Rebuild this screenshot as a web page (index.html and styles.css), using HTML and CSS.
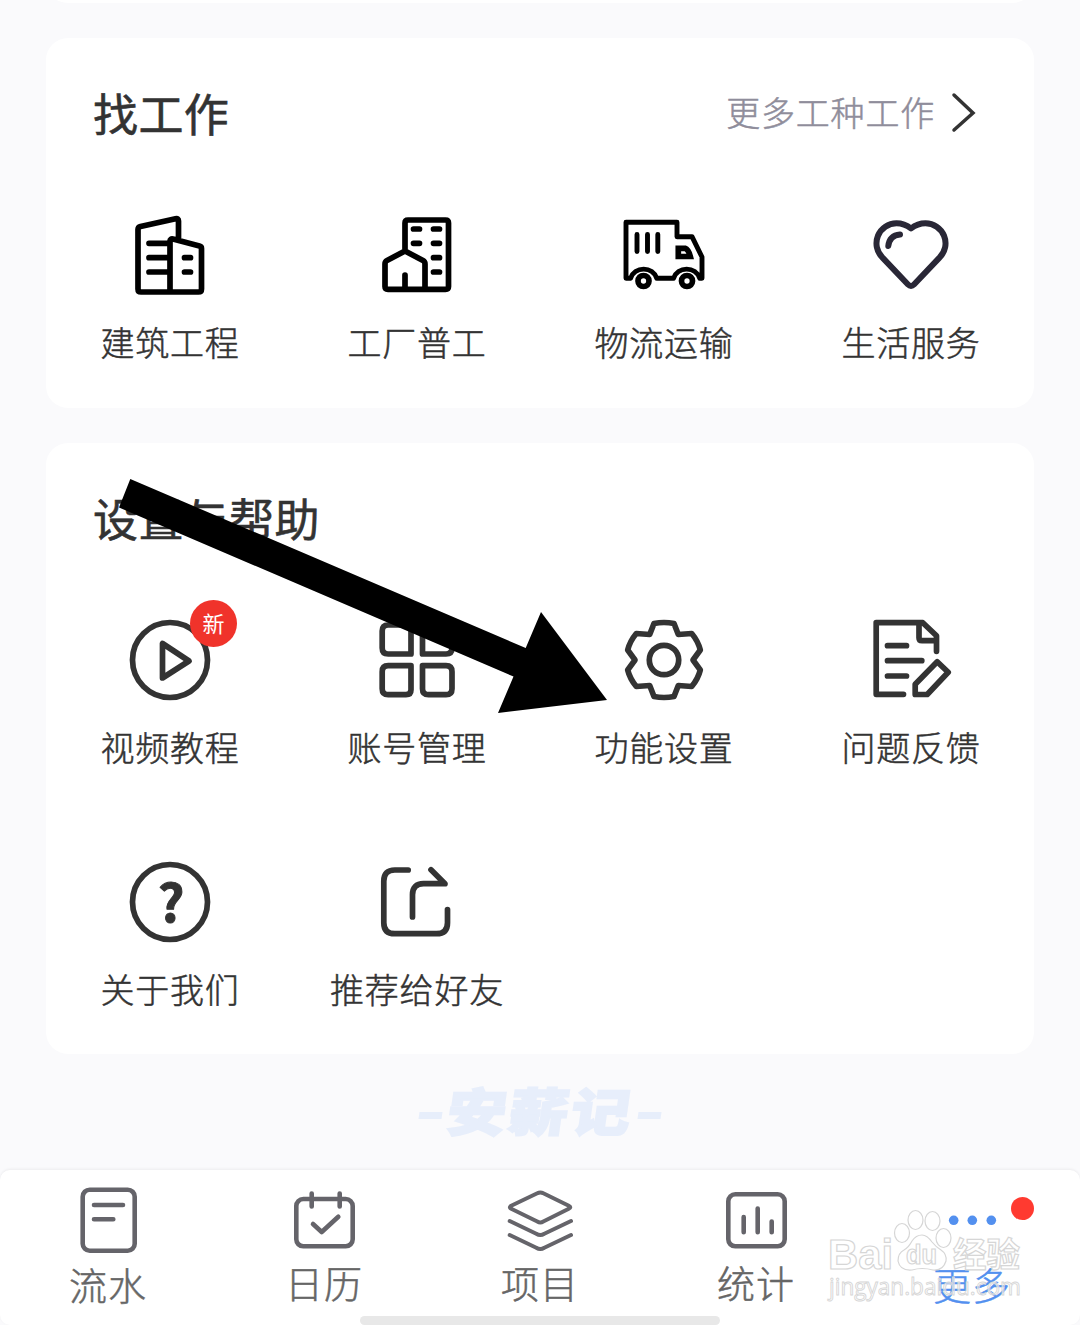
FILE: index.html
```html
<!DOCTYPE html>
<html lang="zh-CN">
<head>
  <meta charset="UTF-8">
  <meta name="viewport" content="width=device-width, initial-scale=1.0">
  <title>更多</title>
  <link rel="stylesheet" href="styles.css">
</head>
<body>
  <main class="page">
    <section class="card card-prev"></section>

    <section class="card jobs">
      <header class="card-header">
        <h2>找工作</h2>
        <a class="more"><span>更多工种工作</span>
          <svg class="chevron" viewBox="0 0 26 42"><path d="M4 3L23 21L4 38"/></svg>
        </a>
      </header>
      <div class="grid">
        <div class="item">
          <svg class="icon black" viewBox="0 0 96 96">
            <path d="M57.500 30V13Q57.500 10 54.500 10.700L19.500 18.500Q17 19.200 17 21.500V81Q17 84 20 84H77.500Q80.500 84 80.500 81V40.500Q80.500 38.500 78.500 38L52 31Q49 30.500 49 33V84"/>
            <path d="M28 35.300H48M28 49.700H48M28 64H48M63.500 49.700H69.500M63.500 64H69.500"/>
          </svg>
          <span>建筑工程</span>
        </div>
        <div class="item">
          <svg class="icon black" viewBox="0 0 96 96">
            <path d="M37 43V15Q37 12 40 12H77.500Q80.500 12 80.500 15V78.500Q80.500 81.300 77.500 81.300H20Q17 81.300 17 78.500V56Q17 53.500 19 52.500L37 43L55 52.500Q57 53.500 57 56V81M37 67V81"/>
            <path d="M45.500 21H51.500M45.500 35.300H51.500M65.500 21H71.500M65.500 35.300H71.500M65.500 49.700H71.500M65.500 64H71.500"/>
          </svg>
          <span>工厂普工</span>
        </div>
        <div class="item">
          <svg class="icon black" viewBox="0 0 96 96">
            <path class="thin" d="M15.500 70.300H11V14.300H62V28.700H77L87 49V70.300H84.800A14 14 0 0 0 58.500 70.300H41.800A14 14 0 0 0 15.500 70.300"/>
            <path class="thin" d="M22 26.500V43.500M32.500 26.500V43.500M42.800 26.500V43.500"/>
            <path class="miter" d="M63.300 40.300H70Q73.500 41.500 75.300 48.500H63.300Z"/>
            <circle cx="28.500" cy="73" r="5.500"/>
            <circle cx="72" cy="73" r="5.500"/>
          </svg>
          <span>物流运输</span>
        </div>
        <div class="item">
          <svg class="icon heart" viewBox="0 0 96 96">
            <path d="M49 20.500C44.500 17 40 15.300 34.500 15.300A20 20 0 0 0 20.500 49.600L46 76.500Q49 79.500 52 76.500L77.500 49.600A20 20 0 0 0 63.500 15.300C58 15.300 53.500 17 49 20.500Z"/>
            <path d="M26.300 38Q27.500 27.500 38 26.500"/>
          </svg>
          <span>生活服务</span>
        </div>
      </div>
    </section>

    <section class="card">
      <header class="card-header">
        <h2>设置与帮助</h2>
      </header>
      <div class="grid">
        <div class="item">
          <svg class="icon" viewBox="0 0 96 96">
            <circle cx="49" cy="47" r="37.500"/>
            <path d="M41.500 30.500V65L68 48Z"/>
          </svg>
          <b class="badge">新</b>
          <span>视频教程</span>
        </div>
        <div class="item">
          <svg class="icon" viewBox="0 0 96 96">
            <path d="M20.200 12H38Q43 12 43 17V41H20.200Q14.200 41 14.200 35V18Q14.200 12 20.200 12Z"/>
            <path d="M60 12H78Q84 12 84 18V35Q84 41 78 41H54.500V17Q54.500 12 60 12Z"/>
            <path d="M20.200 52.700H43V76.700Q43 81.700 38 81.700H20.200Q14.200 81.700 14.200 75.700V58.700Q14.200 52.700 20.200 52.700Z"/>
            <path d="M54.500 52.700H78Q84 52.700 84 58.700V75.700Q84 81.700 78 81.700H60.500Q54.500 81.700 54.500 75.700Z"/>
          </svg>
          <span>账号管理</span>
        </div>
        <div class="item">
          <svg class="icon" viewBox="0 0 96 96">
            <path d="M39 10.500Q49 8.500 59 10.500L63.300 21.500L76.700 20.500Q83 28 85.300 37L78 47L85.300 57Q83 66 76.700 73.500L63.300 72.500L59 83.500Q49 85.500 39 83.500L34.700 72.500L21.300 73.500Q15 66 12.700 57L20 47L12.700 37Q15 28 21.300 20.500L34.700 21.500Z"/>
            <circle cx="49" cy="47" r="14.700"/>
          </svg>
          <span>功能设置</span>
        </div>
        <div class="item">
          <svg class="icon" viewBox="0 0 96 96">
            <path d="M41.500 81.300H14.200V9.700H60.800L74.500 22.700V38.300M57 10V24.700Q57 27.700 60 27.700H74"/>
            <path d="M25.500 32.700H44.500M25.500 47.700H59.800M25.500 63H44.500"/>
            <path d="M75.200 48.700L86.200 59.300L65.200 81.500H53.200V71.300Z"/>
          </svg>
          <span>问题反馈</span>
        </div>
        <div class="item">
          <svg class="icon" viewBox="0 0 96 96">
            <circle cx="49" cy="47" r="37.500"/>
            <text class="question" x="50.500" y="67" text-anchor="middle">?</text>
          </svg>
          <span>关于我们</span>
        </div>
        <div class="item">
          <svg class="icon" viewBox="0 0 96 96">
            <path d="M40.200 15H26.800Q15.800 15 15.800 26V67.700Q15.800 78.700 26.800 78.700H68.500Q79.500 78.700 79.500 67.700V54.500"/>
            <path d="M44.500 62V39.700Q44.500 28.700 55.500 28.700H77L63 14.700"/>
          </svg>
          <span>推荐给好友</span>
        </div>
      </div>
      <svg class="pointer" viewBox="0 0 490 236">
        <path d="M12.300 1L1 29.500L395.500 198.500L380 235L489 222L423 134L407.700 170Z"/>
      </svg>
    </section>

    <div class="brand"><i></i><span>安薪记</span><i></i></div>
  </main>

  <nav class="tabbar">
    <a class="tab low">
      <svg class="tab-icon" viewBox="0 0 72 72">
        <rect x="10.700" y="5.700" width="52" height="61" rx="7"/>
        <path d="M22 21H51M22 35.300H41.300"/>
      </svg>
      <span>流水</span>
    </a>
    <a class="tab">
      <svg class="tab-icon" viewBox="0 0 72 72">
        <rect x="8.300" y="15" width="56.400" height="47.300" rx="7"/>
        <path d="M23.700 9.500V22.500M51.700 9.500V22.500M25 40L33.700 48L50.300 32.700"/>
      </svg>
      <span>日历</span>
    </a>
    <a class="tab">
      <svg class="tab-icon layers" viewBox="0 0 72 72">
        <path d="M33.300 9.300Q36.300 7.500 39.300 9.300L64.800 21.800Q67.800 23.300 64.800 24.800L39.300 37.500Q36.300 39.300 33.300 37.500L7.200 24.800Q4.500 23.300 7.200 21.800Z"/>
        <path d="M5.700 37L32.300 49.700Q36.300 52.200 40.300 49.700L67 37M5.700 51L32.300 63.700Q36.300 66.200 40.300 63.700L67 51"/>
      </svg>
      <span>项目</span>
    </a>
    <a class="tab">
      <svg class="tab-icon" viewBox="0 0 72 72">
        <rect x="8.300" y="10.300" width="56.400" height="52" rx="7"/>
        <path d="M23.700 33V48.300M37.700 24.500V48.300M51.700 37.500V48.300"/>
      </svg>
      <span>统计</span>
    </a>
    <a class="tab low active">
      <svg class="tab-icon dots" viewBox="0 0 72 72">
        <circle cx="17.700" cy="36.300" r="4.800"/>
        <circle cx="36.300" cy="36.300" r="4.800"/>
        <circle cx="55.300" cy="36.300" r="4.800"/>
      </svg>
      <span>更多</span>
      <b class="dot"></b>
    </a>
    <div class="home-bar"></div>
    <svg class="watermark" viewBox="0 0 204 110">
      <text class="wm-big" x="3" y="74" textLength="65" lengthAdjust="spacingAndGlyphs">Bai</text>
      <ellipse cx="77" cy="38" rx="7.500" ry="9.500"/>
      <ellipse cx="90.500" cy="25" rx="7.500" ry="9.500"/>
      <ellipse cx="107.500" cy="26" rx="7.500" ry="9.500"/>
      <ellipse cx="118.500" cy="43" rx="7.500" ry="9.500"/>
      <path d="M97 40Q102 40 107 47Q111 52 116 55Q122 59 121 66Q118 76 108 75Q97 72 87 75Q75 76 73 66Q73 58 79 55Q84 52 87 46Q91 40 97 40Z"/>
      <text class="wm-du" x="81" y="69" textLength="31" lengthAdjust="spacingAndGlyphs">du</text>
      <text class="wm-cn" x="128" y="72" textLength="67" lengthAdjust="spacingAndGlyphs">经验</text>
      <text class="wm-url" x="4" y="100" textLength="192" lengthAdjust="spacingAndGlyphs">jingyan.baidu.com</text>
    </svg>
  </nav>
</body>
</html>
```
FILE: styles.css
```css
* {
  box-sizing: border-box;
}

body {
  margin: 0;
  width: 1080px;
  height: 1325px;
  overflow: hidden;
  display: flex;
  flex-direction: column;
  background: #fafafc;
  color: #333;
  font-family: "Noto Sans CJK SC", sans-serif;
}

.page {
  flex: 1;
  min-height: 0;
  padding: 0 46px;
}

.card {
  position: relative;
  margin-bottom: 35px;
  padding: 46px 0 40px;
  border-radius: 22px;
  background: #fff;
}

.card-prev {
  height: 120px;
  margin-top: -117px;
}

.jobs {
  padding-bottom: 41px;
}

.card-header {
  display: flex;
  align-items: center;
  justify-content: space-between;
  height: 60px;
  padding: 0 58px 0 47px;
  margin-bottom: 64px;
}

h2 {
  margin: 0 0 3px;
  font-size: 45px;
  font-weight: 400;
  line-height: 60px;
  letter-spacing: 0.4px;
  -webkit-text-stroke: 0.6px #333;
}

.more {
  display: flex;
  align-items: center;
  font-size: 34px;
  font-weight: 300;
  letter-spacing: 0.8px;
  color: #8f8d9b;
  -webkit-text-stroke: 0.5px #8f8d9b;
}

.more span {
  margin-bottom: 5px;
}

.chevron {
  width: 26px;
  height: 42px;
  margin-left: 15px;
  margin-bottom: 2px;
  fill: none;
  stroke: #333;
  stroke-width: 3.5;
  stroke-linecap: round;
}

.grid {
  display: grid;
  grid-template-columns: repeat(4, 1fr);
  row-gap: 83px;
}

.item {
  position: relative;
  display: flex;
  flex-direction: column;
  align-items: center;
  font-size: 34px;
  font-weight: 300;
  line-height: 48px;
  letter-spacing: 0.8px;
}

.item span {
  margin: 14px 0 1px 1px;
  -webkit-text-stroke: 0.5px #333;
}

.icon {
  width: 96px;
  height: 96px;
  margin-right: 1px;
  fill: none;
  stroke: #333;
  stroke-width: 5.7;
  stroke-linecap: round;
  stroke-linejoin: round;
}

.black {
  stroke: #000;
}

.thin {
  stroke-width: 4.9;
}

.miter {
  stroke-linejoin: miter;
}

.heart {
  stroke: #292736;
  stroke-width: 6;
}

.question {
  fill: #333;
  stroke: #333;
  stroke-width: 1;
  font: bold 52px "Noto Sans CJK SC", sans-serif;
}

.badge {
  position: absolute;
  top: -13px;
  left: 144px;
  width: 47px;
  height: 47px;
  border-radius: 50%;
  background: #f0332b;
  color: #fff;
  font-size: 22px;
  font-weight: 400;
  line-height: 45px;
  letter-spacing: 0;
  text-align: center;
}

.pointer {
  position: absolute;
  top: 35px;
  left: 72px;
  width: 490px;
  height: 236px;
}

.brand {
  display: flex;
  justify-content: center;
  align-items: center;
  gap: 6px;
  height: 56px;
  margin-top: -4px;
  color: #e7eefb;
  font-size: 59px;
  font-weight: 900;
  line-height: 56px;
  letter-spacing: 3px;
}

.brand span {
  margin-top: -8px;
  margin-right: -3px;
  transform: skewX(-8deg) scaleY(0.86);
  -webkit-text-stroke: 2.5px #e7eefb;
}

.brand i {
  width: 23px;
  height: 7px;
  margin-top: 4px;
  background: #e7eefb;
  transform: skewX(-8deg);
}

.tabbar {
  position: relative;
  display: grid;
  grid-template-columns: repeat(5, 1fr);
  height: 155px;
  padding-top: 14px;
  border-radius: 10px;
  background: #fff;
  box-shadow: 0 -1px 3px rgba(0, 0, 0, 0.06);
}

.tab {
  position: relative;
  display: flex;
  flex-direction: column;
  align-items: center;
  color: #666;
  font-size: 38px;
  font-weight: 300;
  line-height: 56px;
  letter-spacing: 1px;
}

.tab span {
  margin-top: -2px;
  -webkit-text-stroke: 0.5px currentColor;
}

.low span {
  margin-top: 0;
}

.tab-icon {
  width: 72px;
  height: 72px;
  fill: none;
  stroke: #65646a;
  stroke-width: 4.6;
  stroke-linecap: round;
  stroke-linejoin: round;
}

.layers {
  stroke-width: 4;
}

.dots {
  fill: #5390ef;
  stroke: none;
}

.active {
  color: #5390ef;
}

.dot {
  position: absolute;
  top: 13px;
  left: 147px;
  width: 23px;
  height: 23px;
  border-radius: 50%;
  background: #ff3a30;
}

.home-bar {
  position: absolute;
  left: 360px;
  bottom: 0;
  width: 360px;
  height: 9px;
  border-radius: 5px;
  background: #e8e8e8;
}

.watermark {
  position: absolute;
  left: 825px;
  top: 25px;
  width: 204px;
  height: 110px;
  fill: #fff;
  fill-opacity: 0.55;
  stroke: #d6d6d6;
  stroke-width: 1.2;
}

.wm-big {
  font: bold 43px "Liberation Sans", sans-serif;
}

.wm-du {
  font: bold 27px "Liberation Sans", sans-serif;
}

.wm-cn {
  font: bold 34px "Noto Sans CJK SC", sans-serif;
}

.wm-url {
  font: 23px "Open Sans", sans-serif;
  stroke-width: 0.9;
}
```
